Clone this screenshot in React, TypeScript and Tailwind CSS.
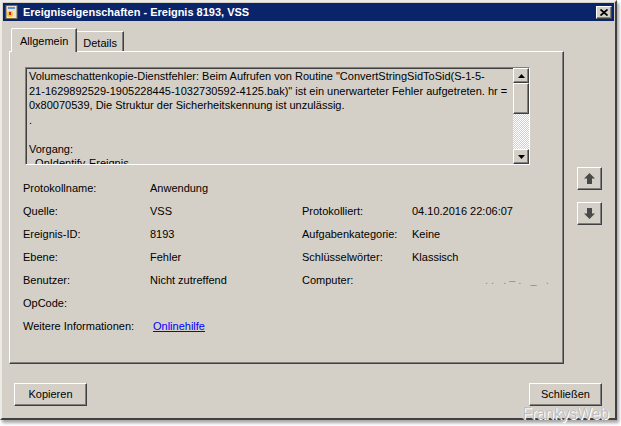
import React from "react";

const raised =
  "border border-t-white border-l-white border-r-[#404040] border-b-[#404040] shadow-[inset_-1px_-1px_0_#808080] bg-[#d4d0c8]";

const rows: [string, React.ReactNode, string?, React.ReactNode?][] = [
  ["Protokollname:", "Anwendung"],
  ["Quelle:", "VSS", "Protokolliert:", "04.10.2016 22:06:07"],
  ["Ereignis-ID:", "8193", "Aufgabenkategorie:", "Keine"],
  ["Ebene:", "Fehler", "Schlüsselwörter:", "Klassisch"],
  [
    "Benutzer:",
    "Nicht zutreffend",
    "Computer:",
    <span className="pl-[73px] text-[#8a8a8a] tracking-[3px]">.. .–. _ .</span>,
  ],
  ["OpCode:", ""],
  [
    "Weitere Informationen:",
    <span className="pl-[3px] text-[#0000ff] underline">Onlinehilfe</span>,
  ],
];

const message = [
  'Volumeschattenkopie-Dienstfehler: Beim Aufrufen von Routine "ConvertStringSidToSid(S-1-5-',
  '21-1629892529-1905228445-1032730592-4125.bak)" ist ein unerwarteter Fehler aufgetreten. hr =',
  "0x80070539, Die Struktur der Sicherheitskennung ist unzulässig.",
  ".",
  "\u00a0",
  "Vorgang:",
  "\u00a0\u00a0OnIdentify-Ereignis",
];

function Arrow({ down }: { down?: boolean }) {
  return (
    <svg width="11" height="11" viewBox="0 0 11 11" className={down ? "rotate-180" : ""}>
      <polygon points="5.5,0 11,5.5 8,5.5 8,11 3,11 3,5.5 0,5.5" fill="#4a4a4a" />
    </svg>
  );
}

function Tri({ down }: { down?: boolean }) {
  return (
    <svg width="7" height="4" viewBox="0 0 7 4">
      <polygon points={down ? "0,0 7,0 3.5,4" : "3.5,0 7,4 0,4"} fill="#000" />
    </svg>
  );
}

export default function App() {
  return (
    <div className="relative w-[621px] h-[426px] bg-white font-['Liberation_Sans',Arial,sans-serif] text-[11px] text-black">
      <div className="w-[617px] h-[420px] bg-[#d4d0c8] border-2 border-t-[#ecebe6] border-l-[#ecebe6] border-r-[#404040] border-b-[#404040] shadow-[2px_3px_3px_rgba(0,0,0,0.35)] flex flex-col">
        {/* title bar */}
        <div className="mt-[1px] mx-[1px] h-[18px] bg-[#0a246a] flex items-center pl-[2px] pr-[2px]">
          <svg width="13" height="14" viewBox="0 0 13 14">
            <rect x="1" y="0.5" width="11" height="13" fill="#e9e3cf" stroke="#7a6a4a" />
            <rect x="3" y="2" width="7" height="2" fill="#6b8fc9" />
            <circle cx="5" cy="9" r="3" fill="#f3c52a" />
            <rect x="4" y="7" width="2" height="3" fill="#d32020" />
          </svg>
          <span className="ml-[5px] font-bold text-white">Ereigniseigenschaften - Ereignis 8193, VSS</span>
          <div className={`ml-auto w-[16px] h-[13px] flex items-center justify-center ${raised}`}>
            <svg width="8" height="7" viewBox="0 0 8 7">
              <path d="M0.5 0.5 L7.5 6.5 M7.5 0.5 L0.5 6.5" stroke="#000" strokeWidth="1.8" />
            </svg>
          </div>
        </div>

        <div className="flex mt-[7px]">
          <div className="ml-[7px] flex flex-col">
            {/* tabs */}
            <div className="flex items-end pl-[2px] h-[23px]">
              <div className="relative z-10 h-[24px] -mb-[1px] px-[8px] pt-[4px] bg-[#d4d0c8] border-l border-t border-t-white border-l-white border-r border-r-[#404040] rounded-tl-[2px] shadow-[inset_-1px_0_0_#808080]">
                Allgemein
              </div>
              <div className="h-[20px] px-[6px] pt-[3px] border-t border-t-white border-r border-r-[#404040] shadow-[inset_-1px_0_0_#808080]">
                Details
              </div>
            </div>
            {/* panel */}
            <div className="w-[555px] h-[313px] border border-t-white border-l-white border-r-[#404040] border-b-[#404040] shadow-[inset_-1px_-1px_0_#808080] pl-[15px] pt-[15px]">
              <div className="w-[505px] h-[98px] flex border border-t-[#808080] border-l-[#808080] border-r-white border-b-white shadow-[inset_1px_1px_0_#404040]">
                <div className="flex-1 overflow-hidden pl-[3px] pt-[1px] leading-[14.5px] whitespace-nowrap">
                  {message.map((l, i) => (
                    <div key={i}>{l}</div>
                  ))}
                </div>
                <div className="w-[16px] flex flex-col">
                  <div className={`h-[15px] flex items-center justify-center ${raised}`}>
                    <Tri />
                  </div>
                  <div className={`h-[31px] ${raised}`} />
                  <div className="flex-1 bg-[repeating-conic-gradient(#ffffff_0_25%,#d4d0c8_0_50%)] bg-[length:2px_2px]" />
                  <div className={`h-[15px] flex items-center justify-center ${raised}`}>
                    <Tri down />
                  </div>
                </div>
              </div>

              <div className="mt-[11px] -ml-[2px] grid grid-cols-[127px_152px_110px_1fr]">
                {rows.map(([a, b, c, d], i) => (
                  <React.Fragment key={i}>
                    <div className="h-[23px] flex items-center pt-[1px]">{a}</div>
                    <div className="h-[23px] flex items-center pt-[1px]">{b}</div>
                    <div className="h-[23px] flex items-center pt-[1px]">{c ?? ""}</div>
                    <div className="h-[23px] flex items-center pt-[1px]">{d ?? ""}</div>
                  </React.Fragment>
                ))}
              </div>
            </div>
          </div>

          <div className="ml-[13px] mt-[139px] flex flex-col gap-[12px]">
            <div className={`w-[25px] h-[23px] flex items-center justify-center ${raised}`}>
              <Arrow />
            </div>
            <div className={`w-[25px] h-[23px] flex items-center justify-center ${raised}`}>
              <Arrow down />
            </div>
          </div>
        </div>

        <div className="mt-[19px] flex justify-between pl-[12px] pr-[13px]">
          <div className={`w-[73px] h-[23px] flex items-center justify-center ${raised}`}>Kopieren</div>
          <div className={`w-[73px] h-[23px] flex items-center justify-center ${raised}`}>Schließen</div>
        </div>
      </div>

      <div className="absolute left-[522px] top-[402px] text-[16px] text-[#bdbdbd] tracking-[-0.3px] [text-shadow:0_0_1px_#ffffff,1px_1px_0_#ffffff]">
        FrankysWeb
      </div>
    </div>
  );
}
